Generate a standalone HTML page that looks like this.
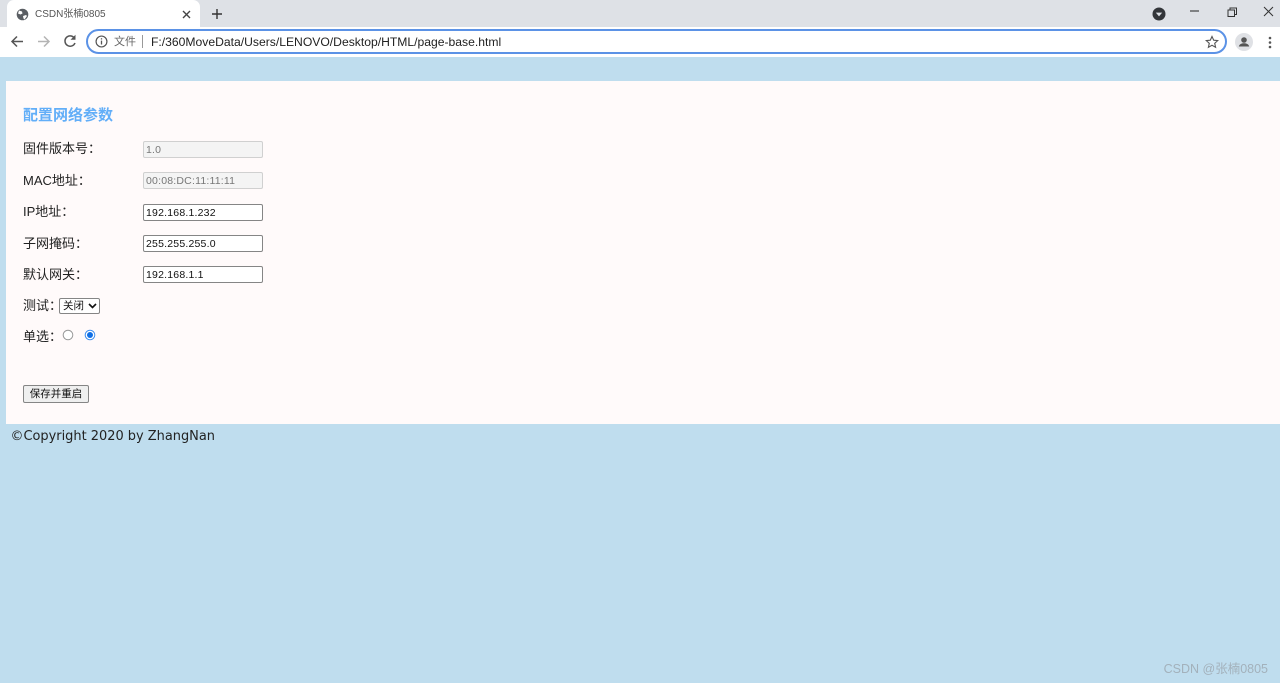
<!DOCTYPE html>
<html><head><meta charset="utf-8"><style>
*{box-sizing:border-box}
html,body{margin:0;padding:0;width:1280px;height:683px;overflow:hidden;background:#bfddee;font-family:"Liberation Sans","Noto Sans CJK SC",sans-serif}
#w{position:absolute;left:0;top:0;width:1280px;height:683px;background:#bfddee;filter:blur(.35px)}
.a{position:absolute;white-space:nowrap}
.lb{left:23px;font-size:13px;line-height:18px;color:#222}
.in{left:143px;width:120px;height:17px;border:1px solid #858585;border-radius:2px;background:#fff;font-size:10.5px;line-height:15px;padding:1px 0 0 2px;color:#111;letter-spacing:.2px}
.in.d{background:#f4f4f4;border-color:#d0d0d0;color:#777}
</style></head><body><div id="w">
<div class="a" style="left:0;top:0;width:1280px;height:27px;background:#dee1e6"></div>
<div class="a" style="left:7px;top:0;width:193px;height:27px;background:#fff;border-radius:7px 7px 0 0"></div>
<svg class="a" style="left:16px;top:8px" width="13" height="13" viewBox="0 0 13 13"><circle cx="6.500" cy="6.500" r="5.800" fill="#5a5e63"/><path d="M3 2.500l3 1 .5 2-2 1-2.500-1zM7 8l3-1 1 1-2.500 3.500-1-1z" fill="#fff"/></svg>
<div class="a" style="left:35px;top:7px;font-size:10px;line-height:15px;color:#555">CSDN张楠0805</div>
<svg class="a" style="left:182px;top:10px" width="9" height="9" viewBox="0 0 9 9"><path d="M1 1l7 7M8 1l-7 7" stroke="#444" stroke-width="1.400"/></svg>
<svg class="a" style="left:211px;top:8px" width="12" height="12" viewBox="0 0 12 12"><path d="M6 1v10M1 6h10" stroke="#333" stroke-width="1.400"/></svg>
<svg class="a" style="left:1152px;top:7px" width="14" height="14" viewBox="0 0 14 14"><circle cx="7" cy="7" r="6.500" fill="#33363a"/><path d="M3.800 5.600h6.400L7 9.400z" fill="#dee1e6"/></svg>
<svg class="a" style="left:1185px;top:5px" width="90" height="14" viewBox="0 0 90 14"><path d="M5 6h9" stroke="#333" stroke-width="1.100"/><path d="M43 5h6.500v6.500h-6.500zM45 5V3h6.500v6.500h-2" fill="none" stroke="#333" stroke-width="1"/><path d="M79 2l9 9M88 2l-9 9" stroke="#333" stroke-width="1"/></svg>

<div class="a" style="left:0;top:27px;width:1280px;height:30px;background:#fff"></div>
<svg class="a" style="left:10px;top:34px" width="70" height="15" viewBox="0 0 70 15"><path d="M13 7.500H2.500M7 2.500l-5 5 5 5" fill="none" stroke="#555" stroke-width="1.500"/><path d="M28 7.500h10.500M34 2.500l5 5-5 5" fill="none" stroke="#b4b4b4" stroke-width="1.500"/><path d="M64 3.500A5.200 5.200 0 1 0 65 9" fill="none" stroke="#555" stroke-width="1.500"/><path d="M60.500 5.800h5v-5z" fill="#555"/></svg>
<div class="a" style="left:86px;top:29px;width:1141px;height:25px;border:2px solid #5b92e6;border-radius:13px;background:#fff"></div>
<svg class="a" style="left:95px;top:35px" width="13" height="13" viewBox="0 0 12 12"><circle cx="6" cy="6" r="5" fill="none" stroke="#555" stroke-width="1.100"/><path d="M6 5.200v3.600M6 3v1.200" stroke="#555" stroke-width="1.200"/></svg>
<div class="a" style="left:114px;top:34px;font-size:11px;line-height:16px;color:#666">文件</div>
<div class="a" style="left:142px;top:35px;width:1px;height:13px;background:#999"></div>
<div class="a" style="left:151px;top:34px;font-size:12.150px;line-height:16px;color:#222">F:/360MoveData/Users/LENOVO/Desktop/HTML/page-base.html</div>
<svg class="a" style="left:1205px;top:35px" width="14" height="14" viewBox="0 0 14 14"><path d="M7 1.500l1.700 3.700 4 .4-3 2.700.9 4L7 10.300l-3.600 2 .9-4-3-2.700 4-.4z" fill="none" stroke="#555" stroke-width="1.100"/></svg>
<svg class="a" style="left:1235px;top:33px" width="18" height="18" viewBox="0 0 18 18"><circle cx="9" cy="9" r="9" fill="#dfe1e5"/><circle cx="9" cy="7" r="2.800" fill="#555"/><path d="M3.800 13.500c.5-2.500 3-3.300 5.200-3.300s4.700.8 5.200 3.300z" fill="#555"/></svg>
<svg class="a" style="left:1268px;top:36px" width="4" height="13" viewBox="0 0 4 13"><circle cx="2" cy="2" r="1.300" fill="#555"/><circle cx="2" cy="6.500" r="1.300" fill="#555"/><circle cx="2" cy="11" r="1.300" fill="#555"/></svg>

<div class="a" style="left:6px;top:81px;width:1274px;height:343px;background:#fffafa"></div>
<div class="a" style="left:23px;top:106px;font-size:15px;line-height:20px;font-weight:bold;color:#62aef8">配置网络参数</div>

<div class="a lb" style="top:140px">固件版本号：</div>
<div class="a in d" style="top:141px">1.0</div>
<div class="a lb" style="top:172px">MAC地址：</div>
<div class="a in d" style="top:172px">00:08:DC:11:11:11</div>
<div class="a lb" style="top:203px">IP地址：</div>
<div class="a in" style="top:204px">192.168.1.232</div>
<div class="a lb" style="top:235px">子网掩码：</div>
<div class="a in" style="top:235px">255.255.255.0</div>
<div class="a lb" style="top:266px">默认网关：</div>
<div class="a in" style="top:266px">192.168.1.1</div>
<div class="a lb" style="top:297px">测试：</div>
<div class="a" style="left:59px;top:298px;width:41px;height:16px;border:1px solid #858585;border-radius:2px;background:#fff;font-size:10.500px;line-height:14px;padding-left:3px;color:#111">关闭</div>
<svg class="a" style="left:88px;top:303px" width="9" height="6" viewBox="0 0 9 6"><path d="M1 1l3.500 3.500L8 1" fill="none" stroke="#111" stroke-width="1.600"/></svg>
<div class="a lb" style="top:328px">单选：</div>
<svg class="a" style="left:62px;top:329px" width="34" height="12" viewBox="0 0 34 12"><circle cx="6" cy="6" r="4.800" fill="#fff" stroke="#999"/><circle cx="28" cy="6" r="4.800" fill="#fff" stroke="#3f8fef"/><circle cx="28" cy="6" r="3" fill="#0f6fe6"/></svg>
<div class="a" style="left:23px;top:385px;width:66px;height:18px;border:1px solid #858585;border-radius:2px;background:#efefef;font-size:10.500px;line-height:16px;text-align:center;color:#111">保存并重启</div>

<div class="a" style="left:10.500px;top:428px;font-family:'DejaVu Sans',sans-serif;font-size:12.950px;line-height:18px;color:#222">©Copyright 2020 by ZhangNan</div>
<div class="a" style="right:12px;top:661px;font-size:12.500px;line-height:16px;color:#a3b1bb">CSDN @张楠0805</div>
</div></body></html>
